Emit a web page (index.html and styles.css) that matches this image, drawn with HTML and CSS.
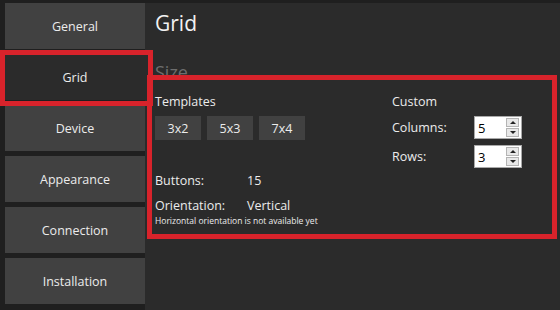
FILE: index.html
```html
<!DOCTYPE html>
<html lang="en">
<head>
    <meta charset="UTF-8">
    <title>Settings - Grid</title>
    <link rel="stylesheet" href="styles.css">
</head>
<body>
    <div class="window">
        <nav class="sidebar">
            <button class="nav-btn">General</button>
            <button class="nav-btn active">Grid</button>
            <button class="nav-btn">Device</button>
            <button class="nav-btn">Appearance</button>
            <button class="nav-btn">Connection</button>
            <button class="nav-btn">Installation</button>
        </nav>

        <main class="content">
            <h1 class="page-title">Grid</h1>
            <h2 class="section-title">Size</h2>

            <div class="size-panel">
                <div class="size-left">
                    <p class="label">Templates</p>
                    <div class="templates">
                        <button class="tpl-btn">3x2</button>
                        <button class="tpl-btn">5x3</button>
                        <button class="tpl-btn">7x4</button>
                    </div>

                    <div class="info-row info-buttons">
                        <span class="info-key">Buttons:</span>
                        <span class="info-val">15</span>
                    </div>
                    <div class="info-row">
                        <span class="info-key">Orientation:</span>
                        <span class="info-val">Vertical</span>
                    </div>
                    <p class="note">Horizontal orientation is not available yet</p>
                </div>

                <div class="size-right">
                    <p class="label">Custom</p>
                    <div class="field-row">
                        <span class="field-key">Columns:</span>
                        <div class="spin">
                            <span class="spin-value">5</span>
                            <div class="spin-arrows">
                                <span class="arrow up"></span>
                                <span class="arrow down"></span>
                            </div>
                        </div>
                    </div>
                    <div class="field-row">
                        <span class="field-key">Rows:</span>
                        <div class="spin">
                            <span class="spin-value">3</span>
                            <div class="spin-arrows">
                                <span class="arrow up"></span>
                                <span class="arrow down"></span>
                            </div>
                        </div>
                    </div>
                </div>
            </div>
        </main>

        <!-- highlight marks drawn on top of the screenshot -->
        <div class="mark mark-nav"></div>
        <div class="mark mark-panel"></div>
    </div>
</body>
</html>
```

FILE: styles.css
```css
* {
    margin: 0;
    padding: 0;
    box-sizing: border-box;
}

body {
    width: 560px;
    height: 310px;
    overflow: hidden;
    background: #1f1f1f;
    font-family: 'Open Sans', 'Noto Sans', sans-serif;
    color: #ececec;
}

.window {
    position: relative;
    display: flex;
    height: 310px;
}

.sidebar {
    width: 145px;
    flex-shrink: 0;
    display: flex;
    flex-direction: column;
    gap: 5px;
    padding: 3px 0 0 5px;
}

.nav-btn {
    height: 46px;
    border: none;
    background: #414141;
    color: #ececec;
    font-family: inherit;
    font-size: 12.5px;
}

.nav-btn.active {
    background: #2b2b2b;
}

.content {
    flex: 1;
    margin-top: 3px;
    background: #2b2b2b;
    padding: 6px 0 0 10px;
}

.page-title {
    font-size: 21px;
    font-weight: normal;
    line-height: 28px;
    color: #f2f2f2;
}

.section-title {
    margin-top: 24px;
    font-size: 18px;
    font-weight: normal;
    line-height: 22px;
    color: #6e6e6e;
}

.size-panel {
    display: flex;
    margin-top: 10px;
}

.size-left {
    width: 237px;
}

.label {
    font-size: 12.5px;
    line-height: 18px;
}

.templates {
    display: flex;
    gap: 6px;
    margin-top: 5px;
}

.tpl-btn {
    width: 46px;
    height: 24px;
    border: none;
    background: #414141;
    color: #ececec;
    font-family: inherit;
    font-size: 12.5px;
}

.info-row {
    display: flex;
    font-size: 12.5px;
    line-height: 18px;
}

.info-buttons {
    margin-top: 32px;
}

.info-row + .info-row {
    margin-top: 7px;
}

.info-key {
    width: 92px;
}

.note {
    margin-top: 1px;
    font-size: 8.5px;
    line-height: 10px;
}

.field-row {
    display: flex;
    align-items: center;
    margin-top: 5px;
    font-size: 12.5px;
}

.field-row + .field-row {
    margin-top: 6px;
}

.field-key {
    width: 82px;
}

.spin {
    display: flex;
    align-items: center;
    justify-content: space-between;
    width: 48px;
    height: 23px;
    background: #fff;
    border: 1px solid #a9a9a9;
    padding: 0 2px 0 3px;
}

.spin-value {
    color: #000;
    font-size: 13px;
}

.spin-arrows {
    display: flex;
    flex-direction: column;
    gap: 1px;
}

.arrow {
    display: flex;
    align-items: center;
    justify-content: center;
    width: 13px;
    height: 9px;
    background: #e8e8e8;
    border: 1px solid #b4b4b4;
}

.arrow::before {
    content: "";
    border-left: 3px solid transparent;
    border-right: 3px solid transparent;
}

.arrow.up::before {
    border-bottom: 3px solid #222;
}

.arrow.down::before {
    border-top: 3px solid #222;
}

.mark {
    position: absolute;
    border: 5px solid #d8232b;
}

.mark-nav {
    left: 0;
    top: 50px;
    width: 153px;
    height: 56px;
}

.mark-panel {
    left: 147px;
    top: 75px;
    width: 410px;
    height: 164px;
}
```
